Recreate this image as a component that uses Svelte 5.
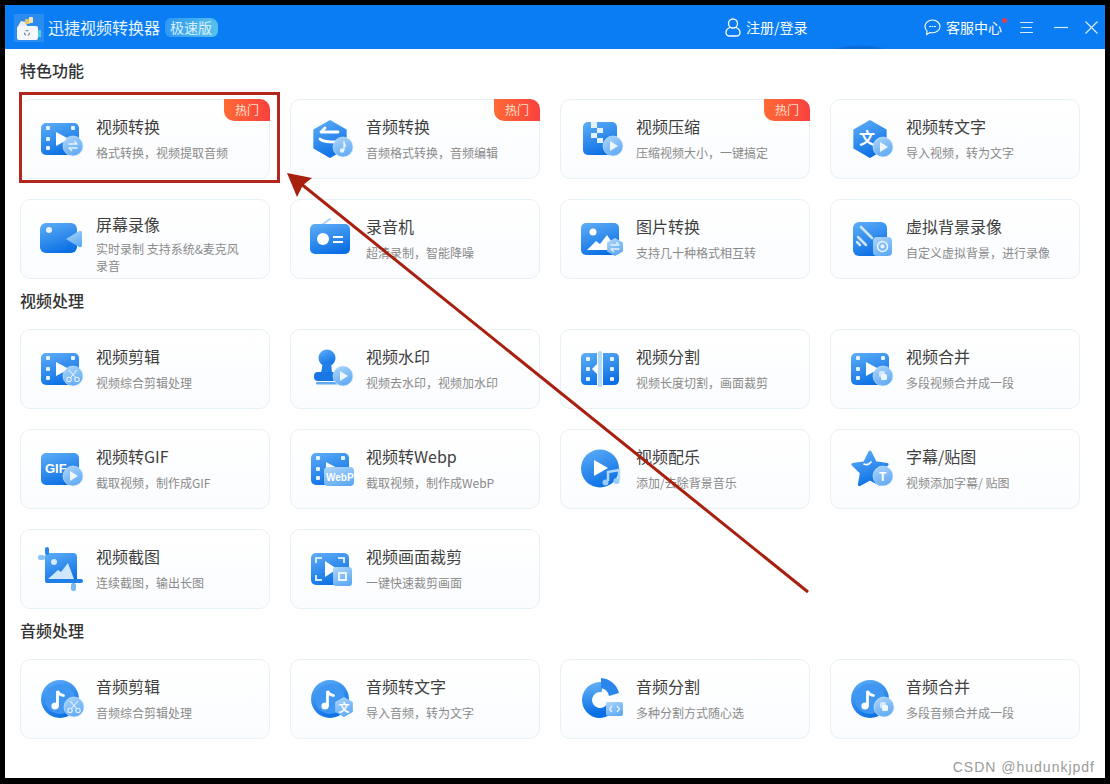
<script>
	const sections = [
		{
			name: '特色功能',
			items: [
				{ title: '视频转换', sub: '格式转换，视频提取音频', icon: 'video-convert', hot: true },
				{ title: '音频转换', sub: '音频格式转换，音频编辑', icon: 'audio-convert', hot: true },
				{ title: '视频压缩', sub: '压缩视频大小，一键搞定', icon: 'compress', hot: true },
				{ title: '视频转文字', sub: '导入视频，转为文字', icon: 'video-text' },
				{ title: '屏幕录像', sub: '实时录制 支持系统&麦克风录音', icon: 'screen', wrap: true },
				{ title: '录音机', sub: '超清录制，智能降噪', icon: 'radio' },
				{ title: '图片转换', sub: '支持几十种格式相互转', icon: 'image' },
				{ title: '虚拟背景录像', sub: '自定义虚拟背景，进行录像', icon: 'virtual' }
			]
		},
		{
			name: '视频处理',
			items: [
				{ title: '视频剪辑', sub: '视频综合剪辑处理', icon: 'video-cut' },
				{ title: '视频水印', sub: '视频去水印，视频加水印', icon: 'stamp' },
				{ title: '视频分割', sub: '视频长度切割，画面裁剪', icon: 'split' },
				{ title: '视频合并', sub: '多段视频合并成一段', icon: 'video-merge' },
				{ title: '视频转GIF', sub: '截取视频，制作成GIF', icon: 'gif' },
				{ title: '视频转Webp', sub: '截取视频，制作成WebP', icon: 'webp' },
				{ title: '视频配乐', sub: '添加/去除背景音乐', icon: 'music' },
				{ title: '字幕/贴图', sub: '视频添加字幕/ 贴图', icon: 'star' },
				{ title: '视频截图', sub: '连续截图，输出长图', icon: 'shot' },
				{ title: '视频画面裁剪', sub: '一键快速裁剪画面', icon: 'crop' }
			]
		},
		{
			name: '音频处理',
			items: [
				{ title: '音频剪辑', sub: '音频综合剪辑处理', icon: 'audio-cut' },
				{ title: '音频转文字', sub: '导入音频，转为文字', icon: 'audio-text' },
				{ title: '音频分割', sub: '多种分割方式随心选', icon: 'pie' },
				{ title: '音频合并', sub: '多段音频合并成一段', icon: 'audio-merge' }
			]
		}
	];
</script>

{#snippet film()}
	<rect x="3" y="6" width="38" height="32" rx="5" fill="url(#blue)" />
	<rect x="8" y="9" width="4" height="4" rx="1" fill="#e4f1fe" />
	<rect x="8" y="20" width="4" height="4" rx="1" fill="#e4f1fe" />
	<rect x="8" y="29" width="4" height="4" rx="1" fill="#e4f1fe" />
	<rect x="33" y="9" width="4" height="4" rx="1" fill="#e4f1fe" />
	<path d="M18 15l13 7-13 7z" fill="#fff" />
{/snippet}

{#snippet hex(cx, cy, r, fill)}
	<path
		d="M{cx} {cy - r}L{cx + r * 0.87} {cy - r / 2}V{cy + r / 2}L{cx} {cy + r}L{cx - r * 0.87} {cy + r / 2}V{cy - r / 2}Z"
		{fill}
		stroke={fill}
		stroke-width="2"
		stroke-linejoin="round"
	/>
{/snippet}

{#snippet dot(cx = 35, cy = 29)}
	<circle {cx} {cy} r="10" fill="url(#light)" stroke="#d5e9fd" stroke-opacity="0.6" />
{/snippet}

{#snippet swap(cx, cy)}
	<path
		d="M{cx - 4} {cy - 2}h8l-2.5-2.5M{cx + 4} {cy + 2}h-8l2.5 2.5"
		fill="none"
		stroke="#e4f1fe"
		stroke-width="1.4"
		stroke-linecap="round"
		stroke-linejoin="round"
	/>
{/snippet}

{#snippet play(cx, cy)}
	<path d="M{cx - 3} {cy - 5}l8 5-8 5z" fill="#eef6fe" />
{/snippet}

{#snippet scissors(cx, cy)}
	<path
		d="M{cx - 4} {cy - 6}L{cx + 3} {cy + 2}M{cx + 4} {cy - 6}L{cx - 3} {cy + 2}"
		stroke="#e4f1fe"
		stroke-width="1.1"
		fill="none"
	/>
	<circle cx={cx - 4} cy={cy + 3.5} r="2.2" fill="none" stroke="#e4f1fe" stroke-width="1.1" />
	<circle cx={cx + 4} cy={cy + 3.5} r="2.2" fill="none" stroke="#e4f1fe" stroke-width="1.1" />
{/snippet}

{#snippet merge(cx, cy)}
	<rect x={cx - 4} y={cy - 5} width="6" height="6" rx="1.5" fill="#d5e9fd" />
	<rect x={cx - 2} y={cy - 2} width="6" height="6" rx="1.5" fill="#eef6fe" />
{/snippet}

{#snippet disc()}
	<circle cx="22" cy="22" r="19" fill="url(#blue)" />
	<circle cx="22" cy="22" r="15" fill="#3f97f1" />
	<circle cx="17" cy="29" r="3.600" fill="#fff" />
	<path d="M19.500 29V14c1 3 3.500 4 6 4.500" fill="none" stroke="#fff" stroke-width="2.800" stroke-linecap="round" />
{/snippet}

{#snippet icon(name)}
	<svg class="icon" width="48" height="48" viewBox="0 0 48 48" aria-hidden="true">
		{#if name === 'video-convert'}
			{@render film()}
			{@render dot()}
			{@render swap(35, 29)}
		{:else if name === 'audio-convert'}
			{@render hex(22, 22, 18, 'url(#blue)')}
			<path
				d="M30 15H13M13 15l4-4M12 22c3 3 10 3 18 3"
				fill="none"
				stroke="#fff"
				stroke-width="2.800"
				stroke-linecap="round"
				stroke-linejoin="round"
			/>
			{@render dot(35, 30)}
			<path d="M36 24c-1 3 2 3 1 6M36 24v9" stroke="#eaf4fe" stroke-width="1.400" fill="none" />
			<circle cx="34" cy="33.500" r="2.200" fill="#eaf4fe" />
		{:else if name === 'compress'}
			<rect x="5" y="5" width="34" height="33" rx="5" fill="url(#blue)" />
			<path
				d="M13 5h6v6h-6zM19 11h6v5h-6zM13 16h6v5h-6zM19 21h6v5h-6z"
				fill="#e4f1fe"
			/>
			{@render dot()}
			{@render play(35, 29)}
		{:else if name === 'video-text'}
			{@render hex(22, 22, 18, 'url(#blue)')}
			<text x="19" y="27" class="glyph" font-size="16" font-weight="700">文</text>
			{@render dot(35, 30)}
			{@render play(35, 30)}
		{:else if name === 'screen'}
			<rect x="2" y="6" width="37" height="30" rx="6" fill="url(#blue)" />
			<circle cx="11" cy="13" r="3" fill="#e8f3fe" />
			<path d="M28 22l13-8q3-1 3 2v12q0 3-3 2z" fill="url(#light)" />
		{:else if name === 'radio'}
			<path d="M15 7l7-5" stroke="#a9d4fb" stroke-width="2" stroke-linecap="round" />
			<rect x="2" y="7" width="40" height="30" rx="5" fill="url(#blue)" />
			<circle cx="15" cy="22" r="6" fill="#fff" />
			<path d="M25 20h10M25 25h10" stroke="#fff" stroke-width="2" />
		{:else if name === 'image'}
			<rect x="3" y="6" width="38" height="32" rx="5" fill="url(#blue)" />
			<circle cx="15" cy="15" r="3.500" fill="#fff" />
			<path d="M9 33l9-9 4 3 7-9 10 15z" fill="#fff" />
			{@render hex(37, 30, 8, 'url(#light)')}
			{@render swap(37, 30)}
		{:else if name === 'virtual'}
			<rect x="5" y="5" width="34" height="34" rx="6" fill="url(#blue)" />
			<path
				d="M13 10l11 11M10 20l8 8M9 25l3 3"
				stroke="#cfe6fd"
				stroke-width="2.500"
				stroke-linecap="round"
			/>
			<rect x="25" y="20" width="19" height="19" rx="4" fill="url(#light)" />
			<circle cx="34.500" cy="29.500" r="5" fill="none" stroke="#eaf4fe" stroke-width="1.500" />
			<circle cx="34.500" cy="29.500" r="2" fill="#eaf4fe" />
		{:else if name === 'video-cut'}
			{@render film()}
			{@render dot()}
			{@render scissors(35, 29)}
		{:else if name === 'stamp'}
			<circle cx="19" cy="11" r="8.500" fill="url(#blue)" />
			<path d="M15 15h8l1 11H13z" fill="#1f7fe6" />
			<rect x="6" y="25" width="29" height="9" rx="4" fill="#1877e4" />
			<rect x="8" y="35" width="22" height="2.500" rx="1.200" fill="#5ea9f3" />
			{@render dot()}
			{@render play(35, 29)}
		{:else if name === 'split'}
			<path d="M8 6h11v32H8q-5 0-5-5V11q0-5 5-5zM25 6h11q5 0 5 5v22q0 5-5 5H25z" fill="url(#blue)" />
			<rect x="20" y="4" width="4" height="36" rx="2" fill="#b4d9fb" />
			<rect x="8" y="10" width="4" height="4" rx="1" fill="#e4f1fe" />
			<rect x="8" y="20" width="4" height="4" rx="1" fill="#e4f1fe" />
			<rect x="8" y="30" width="4" height="4" rx="1" fill="#e4f1fe" />
			<rect x="32" y="10" width="4" height="4" rx="1" fill="#e4f1fe" />
			<rect x="32" y="20" width="4" height="4" rx="1" fill="#e4f1fe" />
			<rect x="32" y="30" width="4" height="4" rx="1" fill="#e4f1fe" />
			<path d="M19 17l-5 5 5 5z" fill="#fff" />
		{:else if name === 'video-merge'}
			{@render film()}
			{@render dot()}
			{@render merge(35, 29)}
		{:else if name === 'gif'}
			<rect x="3" y="6" width="38" height="32" rx="5" fill="url(#blue)" />
			<text x="7" y="26" class="word" font-size="13" font-weight="700">GIF</text>
			{@render dot()}
			{@render play(35, 29)}
		{:else if name === 'webp'}
			{@render film()}
			<rect x="16" y="20" width="30" height="19" rx="4" fill="url(#light)" />
			<text x="18" y="34" class="word" font-size="10" font-weight="700">WebP</text>
		{:else if name === 'music'}
			<circle cx="22" cy="21.500" r="19" fill="url(#blue)" />
			<path d="M16 13l14 8-14 8z" fill="#fff" />
			<path d="M30 34V25l11-2v10" fill="none" stroke="#b4d9fb" stroke-width="2.500" />
			<circle cx="27.500" cy="35.500" r="3" fill="#9accf9" />
			<circle cx="38.500" cy="34" r="3" fill="#9accf9" />
		{:else if name === 'star'}
			<path
				d="M22 5L27.300 15.700 39.100 17.400 30.600 25.800 32.600 37.600 22 32 11.400 37.600 13.400 25.800 4.900 17.400 16.700 15.700Z"
				fill="url(#blue)"
				stroke="url(#blue)"
				stroke-width="3"
				stroke-linejoin="round"
			/>
			<path d="M16 17q4 2 7-2" fill="none" stroke="#fff" stroke-width="1.600" stroke-linecap="round" />
			{@render dot()}
			<text x="31" y="34" class="word" font-size="12" font-weight="700">T</text>
		{:else if name === 'shot'}
			<rect x="7" y="6" width="32" height="30" rx="4" fill="url(#blue)" />
			<circle cx="16" cy="15" r="3" fill="#d5e9fd" />
			<path d="M10 32l10-9 3 2 7-9 6 16z" fill="#cfe6fd" />
			<rect x="0" y="8" width="7" height="5" rx="2" fill="#8fc4f8" />
			<rect x="7" y="0" width="4" height="8" rx="2" fill="#2a86ea" />
			<rect x="7" y="32" width="38" height="4" rx="2" fill="#1f7fe6" />
			<rect x="33" y="36" width="5" height="8" rx="2" fill="#7ab8f5" />
		{:else if name === 'crop'}
			<rect x="3" y="6" width="38" height="32" rx="5" fill="url(#blue)" />
			<path d="M8 16v-5h6M36 16v-5h-6M8 28v5h6" fill="none" stroke="#d5e9fd" stroke-width="2" />
			<path d="M17 14l12 8-12 8z" fill="#fff" />
			<rect x="25" y="20" width="19" height="19" rx="3" fill="url(#light)" />
			<rect x="31" y="26" width="7" height="7" fill="none" stroke="#eaf4fe" stroke-width="2" />
		{:else if name === 'audio-cut'}
			{@render disc()}
			{@render dot(36, 30)}
			{@render scissors(36, 30)}
		{:else if name === 'audio-text'}
			{@render disc()}
			{@render hex(36, 30, 9, 'url(#light)')}
			<text x="36" y="34.500" class="glyph" font-size="11" font-weight="700">文</text>
		{:else if name === 'pie'}
			<circle
				cx="22"
				cy="23"
				r="13"
				fill="none"
				stroke="url(#blue)"
				stroke-width="10"
				stroke-dasharray="60 22"
				transform="rotate(15 22 23)"
			/>
			<path d="M23 1A20 20 0 0 1 41 16L31 19A10 10 0 0 0 23 11Z" fill="#2a86ea" />
			<rect x="28" y="25" width="17" height="14" rx="2" fill="url(#light)" />
			<path d="M34 29l-2.500 3 2.500 3M39 29l2.500 3-2.500 3" fill="none" stroke="#eaf4fe" stroke-width="1.200" />
		{:else if name === 'audio-merge'}
			{@render disc()}
			{@render dot(36, 30)}
			{@render merge(36, 30)}
		{/if}
	</svg>
{/snippet}

<svg class="defs" width="0" height="0" aria-hidden="true">
	<defs>
		<linearGradient id="blue" x1="0.2" y1="0" x2="0.6" y2="1">
			<stop offset="0" stop-color="#5aaaf6" />
			<stop offset="1" stop-color="#0a6fe4" />
		</linearGradient>
		<linearGradient id="light" x1="0.2" y1="0" x2="0.7" y2="1">
			<stop offset="0" stop-color="#a8d3fb" />
			<stop offset="1" stop-color="#5ea9f3" />
		</linearGradient>
	</defs>
</svg>

<div class="window">
	<header class="topbar">
		<div class="brand">
			<svg class="logo" width="30" height="28" viewBox="0 0 30 28" aria-hidden="true">
				<rect width="30" height="28" fill="#2c8bef" />
				<rect x="3" y="12" width="21" height="14" rx="2" fill="#f4f8fc" />
				<rect x="24" y="16" width="3" height="7" fill="#4fd0d8" />
				<path d="M4 12l3-5 5 1 1 4z" fill="#e8eef2" />
				<rect x="11" y="5" width="5" height="5" rx="1" fill="#e3c566" />
				<rect x="15" y="3" width="4" height="6" rx="1" fill="#efe3b8" />
				<circle cx="13" cy="19" r="2.500" fill="none" stroke="#79808c" stroke-width="1.200" stroke-dasharray="3 2" />
			</svg>
			<span class="brand-name">迅捷视频转换器</span>
			<span class="edition">极速版</span>
		</div>
		<div class="user">
			<svg width="16" height="19" viewBox="0 0 16 19" fill="none" stroke="#fff" stroke-width="1.300" aria-hidden="true">
				<circle cx="8" cy="5.500" r="4.500" />
				<path d="M5 9.500C2.500 10.500 1 12 1 14.500 1 17 3 18 5 18h6c2 0 4-1 4-3.500 0-2.500-1.500-4-4-5" />
			</svg>
			<span>注册/登录</span>
		</div>
		<div class="service">
			<svg width="17" height="17" viewBox="0 0 17 17" fill="none" stroke="#fff" stroke-width="1.100" aria-hidden="true">
				<path d="M8.500 1C4.300 1 1 3.900 1 7.500c0 1.700.7 3.200 2 4.400l-.4 3.600 3.400-2c.8.200 1.600.3 2.500.3 4.200 0 7.500-2.900 7.500-6.300S12.700 1 8.500 1z" />
				<path d="M5.500 7.500h1M8 7.500h1M10.500 7.500h1" stroke-linecap="round" />
			</svg>
			<span class="service-text">客服中心<i class="notice"></i></span>
		</div>
		<div class="controls">
			<svg width="13" height="13" viewBox="0 0 13 13" stroke="#d6e9ff" stroke-width="1" aria-hidden="true">
				<path d="M0 1.500h13M1 6.500h11M0 11.500h13" />
			</svg>
			<svg width="14" height="13" viewBox="0 0 14 13" stroke="#d6e9ff" stroke-width="1.200" aria-hidden="true">
				<path d="M0 6.500h14" />
			</svg>
			<svg class="close" width="13" height="13" viewBox="0 0 13 13" stroke="#e4f0ff" stroke-width="1.100" aria-hidden="true">
				<path d="M.5.500l12 12M12.500.500l-12 12" />
			</svg>
		</div>
	</header>

	<main class="content">
		{#each sections as section}
			<h2>{section.name}</h2>
			<div class="grid">
				{#each section.items as item}
					<div class="card" class:wrap={item.wrap}>
						{#if item.hot}
							<span class="hot">热门</span>
						{/if}
						{@render icon(item.icon)}
						<div class="text">
							<div class="title">{item.title}</div>
							<div class="sub">{item.sub}</div>
						</div>
					</div>
				{/each}
			</div>
		{/each}
	</main>
</div>

<div class="mark-box"></div>
<svg class="mark-arrow" width="1110" height="784" viewBox="0 0 1110 784" aria-hidden="true">
	<path d="M808 592L300 183" stroke="#a8200f" stroke-width="3" />
	<path d="M287 173L312 178 303 185 297 197Z" fill="#a8200f" />
</svg>
<div class="watermark">CSDN @hudunkjpdf</div>

<style>
	:global(body) {
		background: #000;
		font-family: 'Noto Sans CJK SC', 'Liberation Sans', sans-serif;
	}

	.defs {
		position: absolute;
	}

	.window {
		margin: 5px 5px 0;
		width: 1100px;
		height: 773px;
		background: #fff;
		overflow: hidden;
	}

	.topbar {
		height: 44px;
		display: flex;
		align-items: center;
		color: #fff;
		font-size: 14px;
		background: radial-gradient(ellipse 28px 4px at 855px 44px, #0a6bd8 0, #0a6bd8 60%, transparent 100%), #0a7df5;
	}

	.brand {
		display: flex;
		align-items: center;
		margin-left: 9px;
		width: 711px;
	}

	.logo {
		margin-top: 1px;
	}

	.brand-name {
		margin-left: 4px;
		font-size: 16px;
		color: #e6f3ff;
		line-height: 1;
	}

	.edition {
		margin-left: 5px;
		padding: 0 6px 0 5px;
		height: 19px;
		line-height: 19px;
		font-size: 14px;
		color: #dcefff;
		border-radius: 6px 8px 6px 6px;
		background: linear-gradient(100deg, #2f97f5, #56c3ea);
	}

	.user {
		display: flex;
		align-items: center;
		gap: 5px;
		width: 199px;
	}

	.service {
		display: flex;
		align-items: center;
		gap: 5px;
		width: 96px;
	}

	.service-text {
		position: relative;
		white-space: nowrap;
	}

	.notice {
		position: absolute;
		top: 1px;
		right: -5px;
		width: 5px;
		height: 5px;
		border-radius: 50%;
		background: #e8394d;
	}

	.controls {
		display: flex;
		align-items: center;
		gap: 21px;
	}

	.close {
		margin-left: -4px;
	}

	.content {
		padding: 0 25px 0 15px;
	}

	h2 {
		margin: 0;
		height: 50px;
		line-height: 43px;
		font-size: 16px;
		font-weight: 500;
		color: #333;
	}

	.grid {
		display: grid;
		grid-template-columns: repeat(4, 250px);
		grid-auto-rows: 80px;
		gap: 20px;
	}

	.card {
		position: relative;
		box-sizing: border-box;
		display: flex;
		padding: 18px 0 0 18px;
		border: 1px solid #e8f1f6;
		border-radius: 10px;
		background: linear-gradient(180deg, #fff, #fafcfe);
	}

	.hot {
		position: absolute;
		top: -1px;
		right: -1px;
		width: 46px;
		height: 22px;
		line-height: 21px;
		text-align: center;
		font-size: 12px;
		color: #ffe0cf;
		border-radius: 0 10px 0 10px;
		background: linear-gradient(90deg, #ff6a35, #f9413f);
	}

	.icon {
		flex: none;
		margin: -1px 0 0 -1px;
	}

	.text {
		margin: -2px 0 0 10px;
		width: 152px;
	}

	.title {
		height: 20px;
		line-height: 20px;
		font-size: 16px;
		color: #3f3f3f;
		white-space: nowrap;
	}

	.sub {
		margin-top: 8px;
		line-height: 17px;
		font-size: 12px;
		color: #8a8a8a;
	}

	.wrap .text {
		margin-top: -4px;
	}

	.wrap .sub {
		margin-top: 6px;
	}

	.glyph {
		fill: #fff;
		font-family: 'Noto Sans CJK SC', sans-serif;
		text-anchor: middle;
	}

	.word {
		fill: #fff;
		font-family: 'Liberation Sans', sans-serif;
	}

	/* annotations drawn over the screenshot */
	.mark-box {
		position: absolute;
		left: 19px;
		top: 92px;
		width: 261px;
		height: 91px;
		box-sizing: border-box;
		border: 3px solid #b0281e;
	}

	.mark-arrow {
		position: absolute;
		left: 0;
		top: 0;
		pointer-events: none;
	}

	.watermark {
		position: absolute;
		right: 15px;
		top: 759px;
		font-family: 'Liberation Sans', sans-serif;
		font-size: 14px;
		letter-spacing: 1px;
		color: #9a9a9a;
	}
</style>
